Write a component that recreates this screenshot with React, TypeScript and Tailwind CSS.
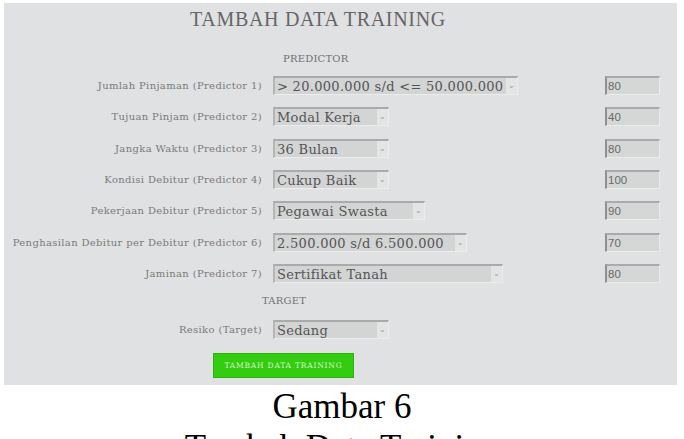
const rows = [
  { label: "Jumlah Pinjaman (Predictor 1)", value: "> 20.000.000 s/d <= 50.000.000", w: "w-[245px]", score: "80" },
  { label: "Tujuan Pinjam (Predictor 2)", value: "Modal Kerja", w: "w-[116px]", score: "40" },
  { label: "Jangka Waktu (Predictor 3)", value: "36 Bulan", w: "w-[116px]", score: "80" },
  { label: "Kondisi Debitur (Predictor 4)", value: "Cukup Baik", w: "w-[116px]", score: "100" },
  { label: "Pekerjaan Debitur (Predictor 5)", value: "Pegawai Swasta", w: "w-[152px]", score: "90" },
  { label: "Penghasilan Debitur per Debitur (Predictor 6)", value: "2.500.000 s/d 6.500.000", w: "w-[194px]", score: "70" },
  { label: "Jaminan (Predictor 7)", value: "Sertifikat Tanah", w: "w-[230px]", score: "80" },
];

const Select = ({ value, w }: { value: string; w: string }) => (
  <div
    className={`${w} h-[19px] flex items-stretch bg-[#d3d4d4] border-t-2 border-l-2 border-t-[#a9aaaa] border-l-[#b4b5b5] border-r border-b border-r-[#ececec] border-b-[#ececec]`}
  >
    <div className="flex-1 pl-[2px] text-[13px] leading-[17px] tracking-[0.3px] text-[#555] whitespace-nowrap overflow-hidden">
      {value}
    </div>
    <div className="w-[11px] bg-[#e4e4e4] flex items-center justify-center text-[8px] text-[#9a9a9a]">
      ⌄
    </div>
  </div>
);

export default function App() {
  return (
    <div className="w-[684px] h-[439px] bg-white overflow-hidden font-['DejaVu_Serif',serif]">
      <div className="ml-[4px] mt-[3px] w-[673px] h-[382px] bg-[#e0e1e2] flex flex-col">
        <div className="pl-[186px] pt-[2px] h-[30px] text-[20px] leading-[28px] text-[#666] font-['Liberation_Serif',serif] tracking-[0.7px]">
          TAMBAH DATA TRAINING
        </div>
        <div className="pl-[279px] pt-[19px] h-[37px] text-[10px] leading-[13px] tracking-[0.2px] text-[#707070]">
          PREDICTOR
        </div>
        <div className="flex flex-col">
          {rows.map((r) => (
            <div key={r.label} className="h-[31.3px] flex items-center">
              <div className="w-[258px] text-right text-[10px] tracking-[0.35px] text-[#7a7a7a] whitespace-nowrap">
                {r.label}
              </div>
              <div className="ml-[11px] flex-1">
                <Select value={r.value} w={r.w} />
              </div>
              <div className="w-[55px] h-[19px] mr-[17px] bg-[#d5d6d6] border-t-2 border-l-2 border-t-[#a9aaaa] border-l-[#8f9090] border-r border-b border-r-[#ececec] border-b-[#ececec] pl-[1px] text-[11.5px] leading-[16px] text-[#6a6a6a] font-['Liberation_Sans',sans-serif]">
                {r.score}
              </div>
            </div>
          ))}
        </div>
        <div className="pl-[258px] pt-[6px] h-[24px] text-[10px] leading-[12px] tracking-[0.2px] text-[#707070]">
          TARGET
        </div>
        <div className="h-[32px] flex items-center">
          <div className="w-[258px] text-right text-[10px] tracking-[0.35px] text-[#7a7a7a]">Resiko (Target)</div>
          <div className="ml-[11px]">
            <Select value="Sedang" w="w-[116px]" />
          </div>
        </div>
        <div className="pl-[209px] pt-[8px]">
          <div className="w-[141px] h-[25px] bg-[#33cc11] border border-[#2bb20c] flex items-center justify-center text-[7.5px] text-[#d4f5c8] tracking-[0.8px]">
            TAMBAH DATA TRAINING
          </div>
        </div>
      </div>
      <div className="pt-[1px] text-center text-[35px] leading-[41px] text-black font-['Liberation_Serif',serif]">
        <div>Gambar 6</div>
        <div>Tambah Data Training</div>
      </div>
    </div>
  );
}
